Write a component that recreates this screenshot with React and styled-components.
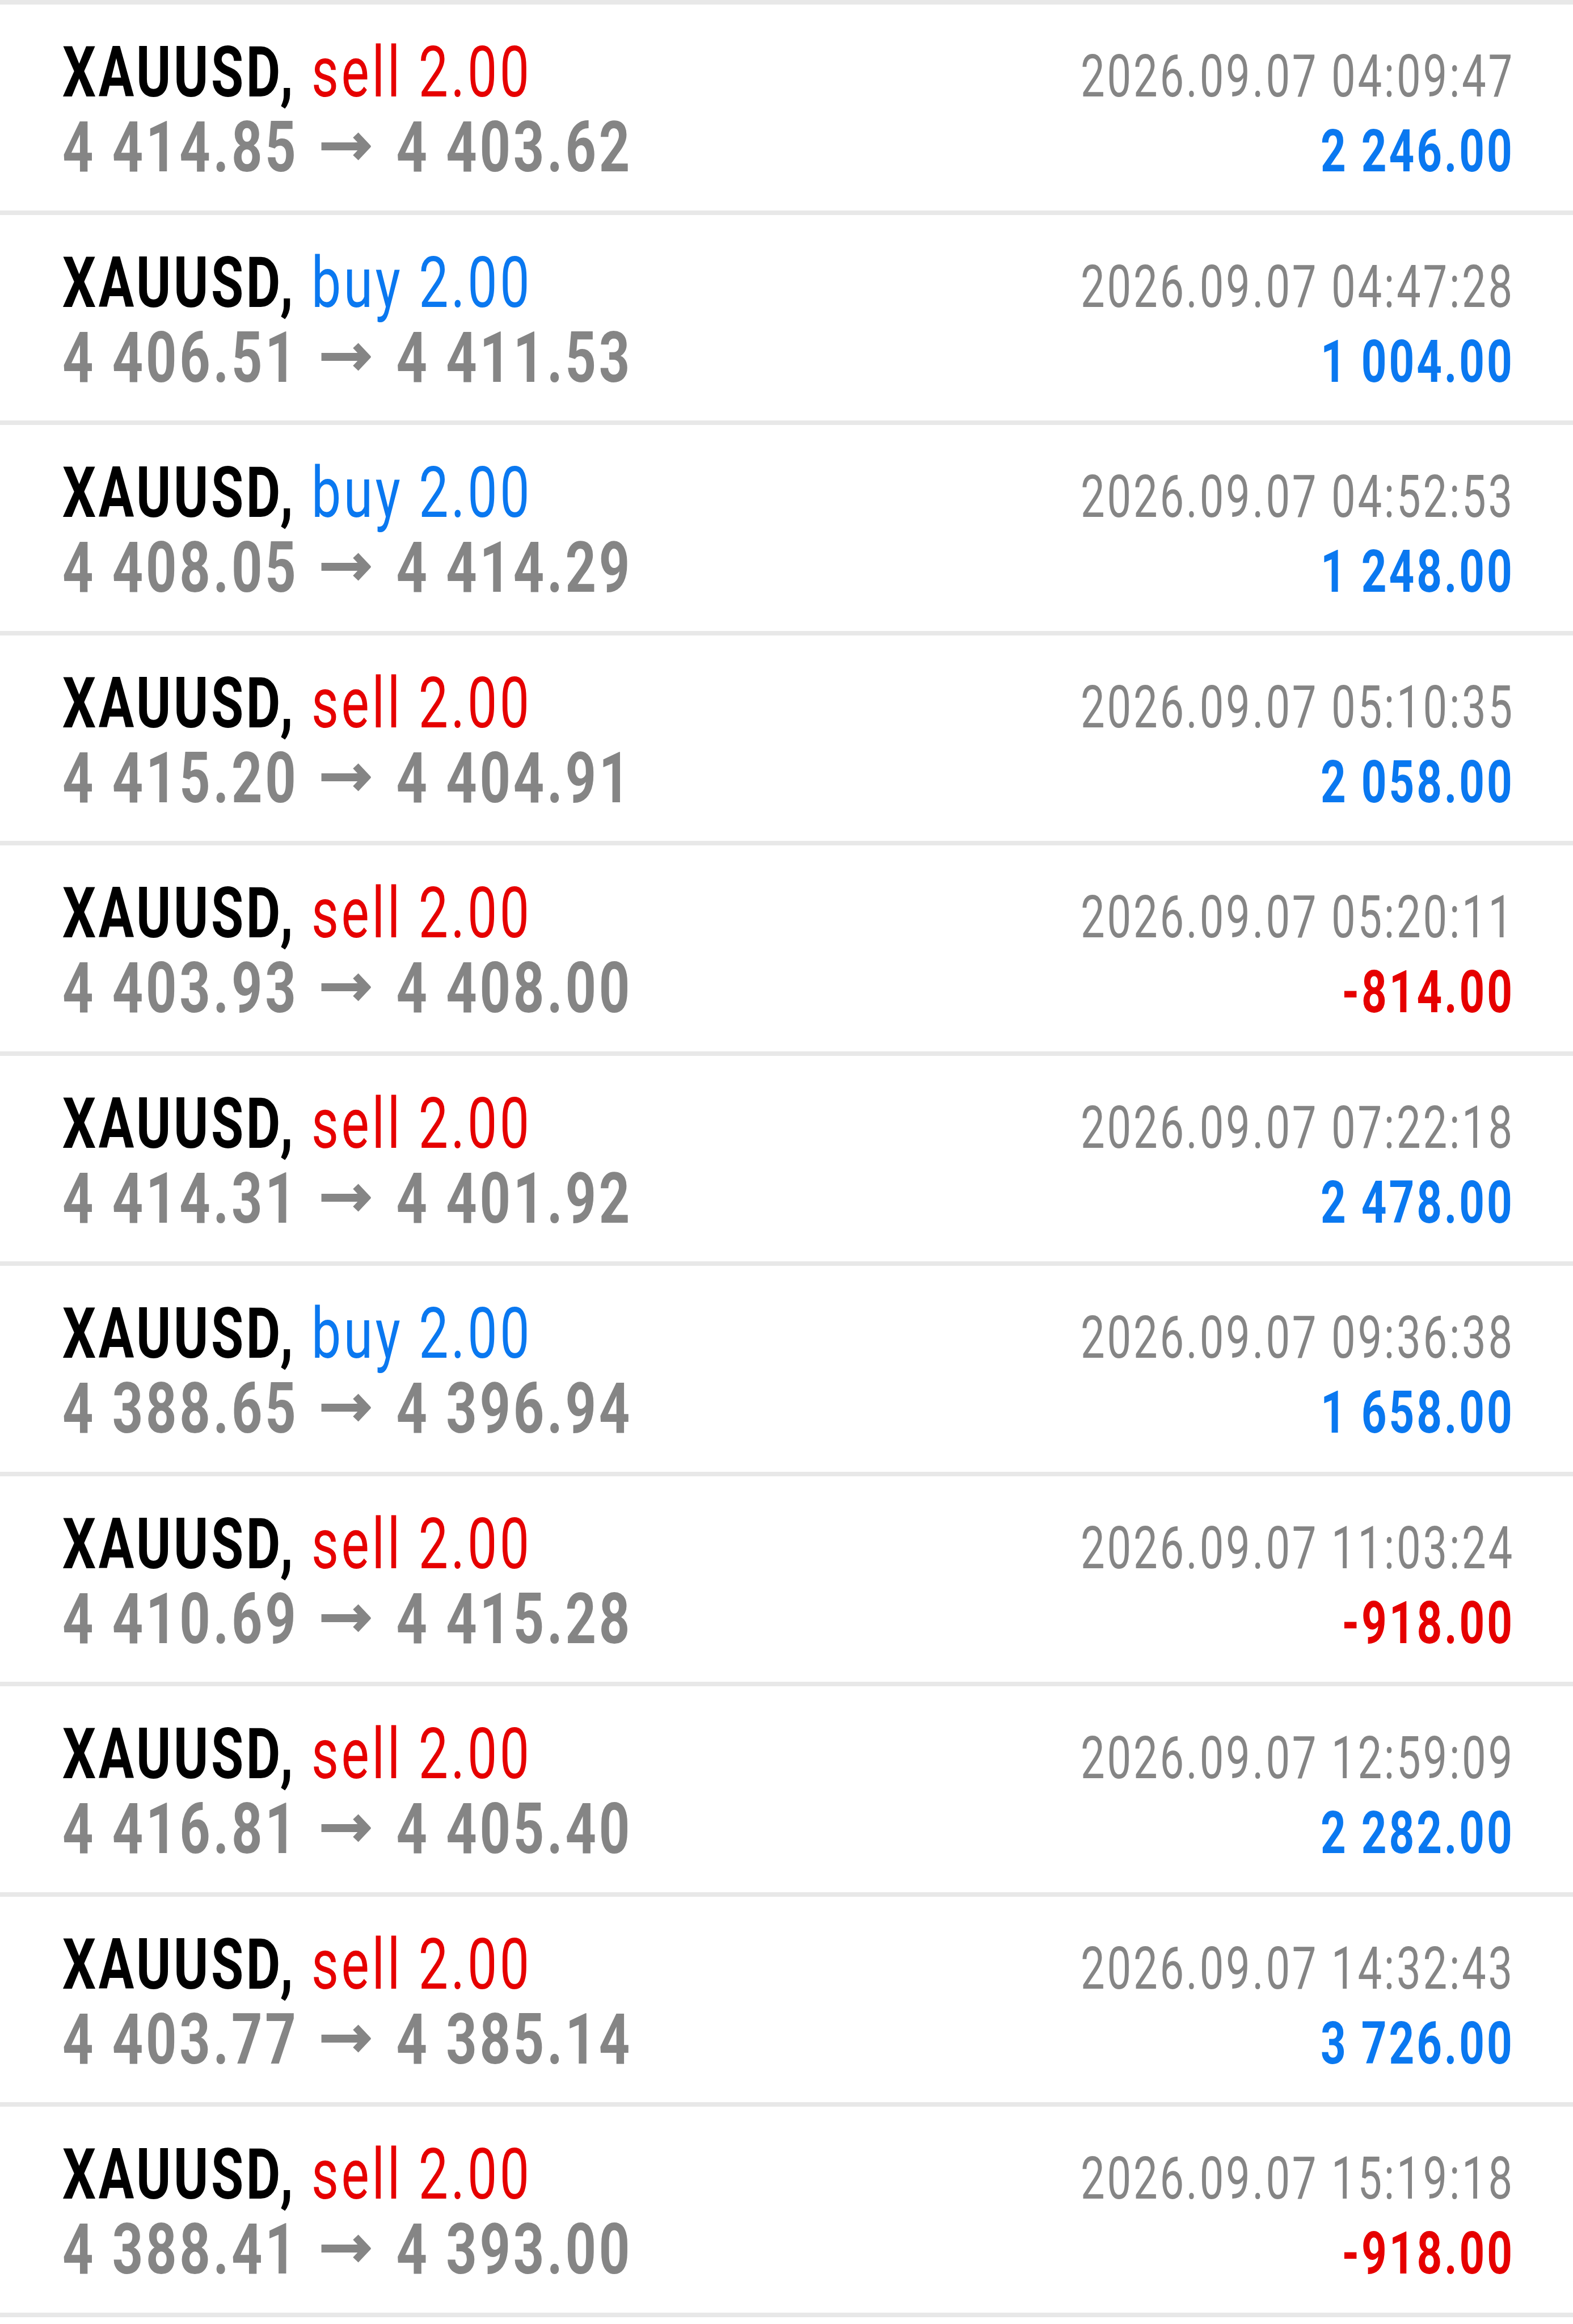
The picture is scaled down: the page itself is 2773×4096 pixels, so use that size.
import React from "react";
import styled, { createGlobalStyle } from "styled-components";

const Global = createGlobalStyle`
  html, body {
    margin: 0;
    padding: 0;
    background: #ffffff;
  }
  body {
    font-family: Roboto, "Noto Sans", "Liberation Sans", sans-serif;
  }
`;

const COLORS = {
  sell: "#e60000",
  buy: "#0a78f0",
  gray: "#858585",
  line: "#e8e8e8",
};

const List = styled.div`
  border-top: 8px solid ${COLORS.line};
`;

const Row = styled.div`
  box-sizing: border-box;
  height: 370.5px;
  border-bottom: 8px solid ${COLORS.line};
  padding: 54px 103px 0 110px;
  display: flex;
  flex-direction: column;
`;

const Line = styled.div`
  display: flex;
  justify-content: space-between;
  align-items: baseline;
  height: 132px;
`;

const Condensed = styled.span`
  display: inline-block;
  white-space: pre;
  transform: scaleX(${(p) => p.$scale || 0.75});
  letter-spacing: 0.05em;
  transform-origin: ${(p) => (p.$right ? "right" : "left")} center;
`;

const Title = styled(Condensed)`
  font-size: 124px;
  line-height: 132px;
  color: #000;
`;

const Symbol = styled.span`
  font-weight: 700;
`;

const Side = styled.span`
  font-weight: 400;
  color: ${(p) => (p.$side === "buy" ? COLORS.buy : COLORS.sell)};
`;

const Prices = styled(Condensed)`
  font-size: 124px;
  line-height: 132px;
  font-weight: 700;
  color: ${COLORS.gray};
`;

const ArrowIcon = styled.svg`
  display: inline-block;
  width: 114px;
  height: 50px;
  vertical-align: 19px;
  margin: 0 58px 0 52px;
`;

const Time = styled(Condensed)`
  font-size: 103px;
  line-height: 103px;
  font-weight: 400;
  color: ${COLORS.gray};
`;

const Profit = styled(Condensed)`
  font-size: 104px;
  line-height: 104px;
  font-weight: 700;
  color: ${(p) => (p.$negative ? COLORS.sell : COLORS.buy)};
`;

const Arrow = () => (
  <ArrowIcon viewBox="0 0 88 50" preserveAspectRatio="none" aria-hidden="true">
    <rect x="0" y="18" width="80" height="14" fill="currentColor" />
    <polyline
      points="61,5 80,25 61,45"
      fill="none"
      stroke="currentColor"
      strokeWidth="13"
      strokeLinejoin="miter"
    />
  </ArrowIcon>
);

const trades = [
  { side: "sell", open: "4 414.85", close: "4 403.62", time: "04:09:47", profit: "2 246.00" },
  { side: "buy", open: "4 406.51", close: "4 411.53", time: "04:47:28", profit: "1 004.00" },
  { side: "buy", open: "4 408.05", close: "4 414.29", time: "04:52:53", profit: "1 248.00" },
  { side: "sell", open: "4 415.20", close: "4 404.91", time: "05:10:35", profit: "2 058.00" },
  { side: "sell", open: "4 403.93", close: "4 408.00", time: "05:20:11", profit: "-814.00" },
  { side: "sell", open: "4 414.31", close: "4 401.92", time: "07:22:18", profit: "2 478.00" },
  { side: "buy", open: "4 388.65", close: "4 396.94", time: "09:36:38", profit: "1 658.00" },
  { side: "sell", open: "4 410.69", close: "4 415.28", time: "11:03:24", profit: "-918.00" },
  { side: "sell", open: "4 416.81", close: "4 405.40", time: "12:59:09", profit: "2 282.00" },
  { side: "sell", open: "4 403.77", close: "4 385.14", time: "14:32:43", profit: "3 726.00" },
  { side: "sell", open: "4 388.41", close: "4 393.00", time: "15:19:18", profit: "-918.00" },
];

export default function App() {
  return (
    <>
      <Global />
      <List>
        {trades.map((t, i) => (
          <Row key={i}>
            <Line>
              <Title $scale={0.75}>
                <Symbol>XAUUSD,</Symbol>
                <Side $side={t.side}> {t.side} 2.00</Side>
              </Title>
              <Time $right $scale={0.737}>
                2026.09.07 {t.time}
              </Time>
            </Line>
            <Line>
              <Prices $scale={0.767}>
                {t.open}
                <Arrow />
                {t.close}
              </Prices>
              <Profit $right $scale={0.75} $negative={t.profit.startsWith("-")}>
                {t.profit}
              </Profit>
            </Line>
          </Row>
        ))}
      </List>
    </>
  );
}
